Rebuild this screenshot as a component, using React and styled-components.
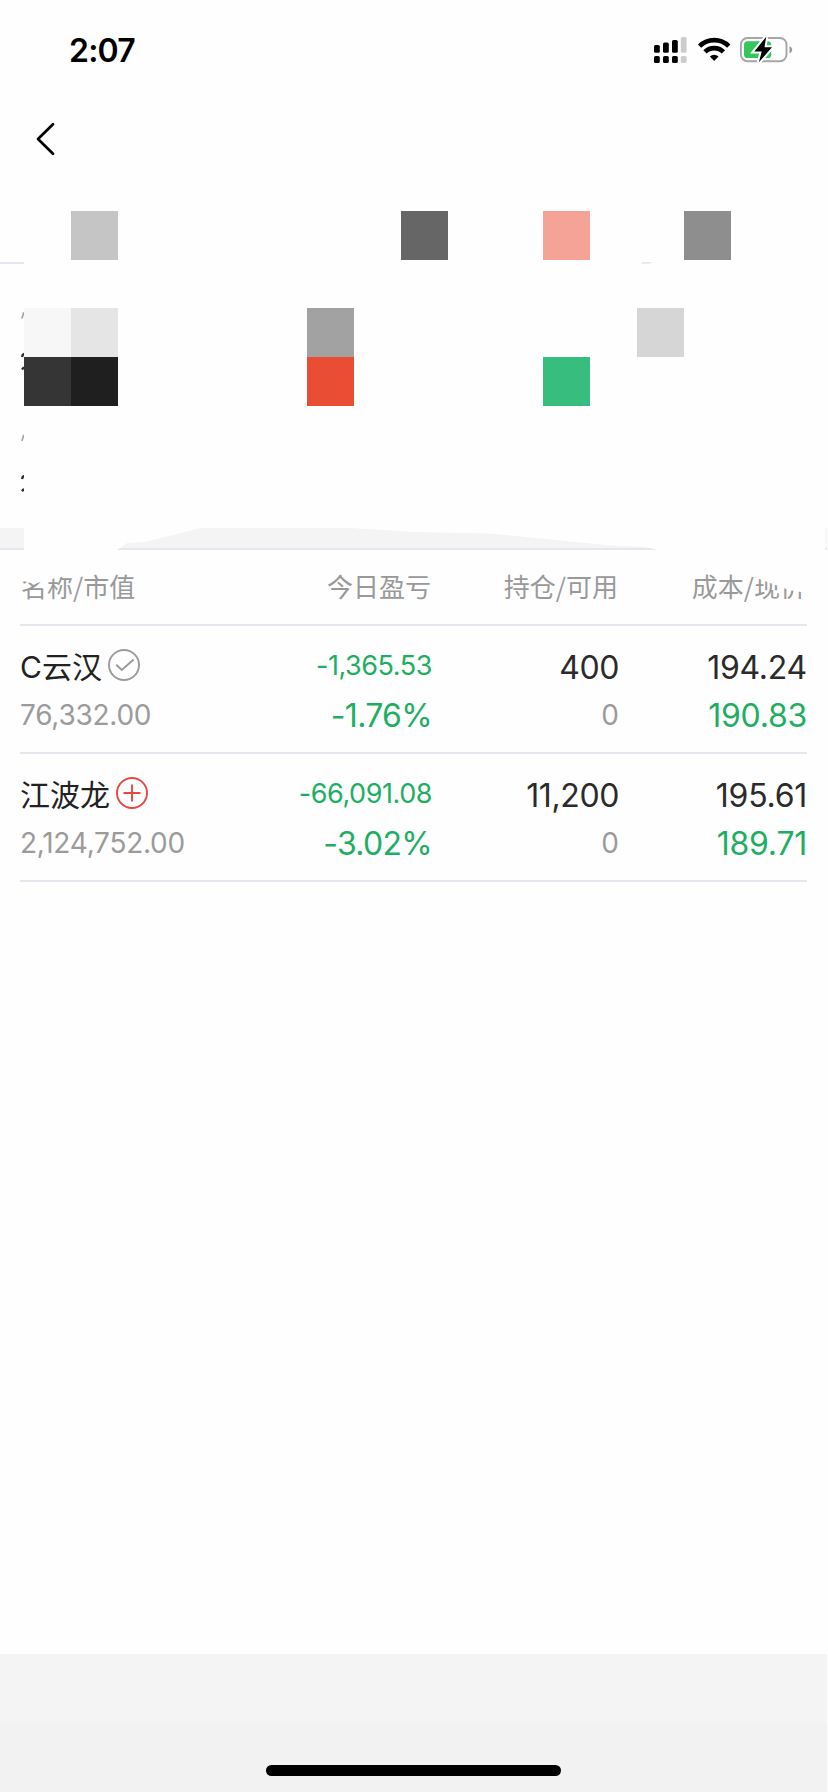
import React from 'react'

import styled, { createGlobalStyle } from 'styled-components'

const GlobalStyle = createGlobalStyle`
  * {
    box-sizing: border-box;
  }
  body {
    margin: 0;
    background: #fefefe;
    font-family: Inter, 'Noto Sans CJK SC', sans-serif;
  }
`
const Page = styled.div`
  display: flex;
  flex-direction: column;
  width: 828px;
  height: 1792px;
  overflow: hidden;
  background: #fefefe;
`
const StatusBar = styled.header`
  display: flex;
  align-items: center;
  justify-content: space-between;
  height: 100px;
  padding: 0 35px 0 69px;
`
const Time = styled.span`
  padding-top: 1px;
  color: #000;
  font-size: 32px;
  font-weight: 600;
  line-height: 40px;
  letter-spacing: -0.8px;
`
const StatusIcons = styled.svg`
  display: block;
  width: 140px;
  height: 28px;
`
const NavBar = styled.nav`
  display: flex;
  align-items: center;
  height: 78px;
  padding-left: 35px;
`
const BackButton = styled.button`
  display: flex;
  padding: 0;
  border: 0;
  background: none;
`
const Summary = styled.section`
  display: flex;
  height: 317px;
  margin-top: 33px;
`
const Edge = styled.svg`
  flex: none;
  width: 24px;
  height: 317px;
`
const Mosaic = styled.div`
  display: grid;
  grid-template-columns: repeat(17, 47.15px);
  grid-template-rows: repeat(6, 48.67px);
  width: 804px;
  overflow: hidden;
`
const Tile = styled.div`
  grid-column: ${(p) => p.$col};
  grid-row: ${(p) => p.$row};
  background: ${(p) => p.$color};
`
const LinePiece = styled.div`
  grid-column: 14;
  grid-row: 2;
  width: 12px;
  height: 2px;
  margin: 2px 0 0 4px;
  background: #e6e6ee;
  clip-path: polygon(2px 0, 100% 0, 9px 100%, 0 100%);
`
const Band = styled.div`
  flex: none;
  width: 827px;
  height: 22px;
  background: #f4f4f4;
  border-bottom: 2px solid #e6e6ee;
  clip-path: polygon(
    0 0, 24px 0, 24px 22px, 117px 22px, 127px 15px, 145px 14px, 201px 0,
    352px 0, 414px 4px, 490px 5.5px, 606px 17px, 645px 19px, 657px 22px,
    825.5px 22px, 825.5px 0, 827px 0, 827px 22px, 0 22px
  );
`
const Table = styled.main`
  flex: 1;
  padding: 0 21px 0 20px;
`
const Row = styled.div`
  display: grid;
  grid-template-columns: 180px 232px 187px 188px;
  height: ${(p) => (p.$head ? 76 : 128)}px;
  padding-top: ${(p) => (p.$head ? 0 : 20)}px;
  border-bottom: 2px solid #e6e6ee;
`
const HeadCell = styled.div`
  position: relative;
  padding: 0 1px;
  color: #999;
  font-family: 'Noto Sans CJK SC', sans-serif;
  font-size: 26px;
  line-height: 71px;
  white-space: nowrap;
  text-align: ${(p) => (p.$left ? 'left' : 'right')};

  /* smear over the upper part of the label */
  &::after {
    content: '';
    position: absolute;
    inset: 0;
    background: #fefefe;
    clip-path: ${(p) => p.$mask || 'polygon(0 0, 0 0, 0 0)'};
  }
`
const Cell = styled.div`
  display: flex;
  flex-direction: column;
  align-items: ${(p) => (p.$left ? 'flex-start' : 'flex-end')};
  white-space: nowrap;
`
const colors = { down: '#1eae63', dark: '#2b2b2b', muted: '#9b9b9b' }

const Value = styled.span`
  display: flex;
  align-items: center;
  height: ${(p) => (p.$second ? 54 : 42)}px;
  padding-bottom: ${(p) => p.$lift || 0}px;
  color: ${(p) => colors[p.$tone]};
  font-size: ${(p) => p.$size || 32}px;
  letter-spacing: ${(p) => p.$spacing || 0}px;
`
const Name = styled.span`
  display: flex;
  align-items: center;
  height: 42px;
  color: #222;
  font-size: 30px;
  line-height: 42px;

  svg {
    margin: -5px 0 0 6px;
  }
`
const TabBar = styled.footer`
  flex: none;
  display: flex;
  justify-content: center;
  align-items: flex-end;
  width: 827px;
  height: 138px;
  padding-bottom: 16px;
  background: linear-gradient(#f4f4f4 70px, #f2f2f2 70px);
`
const HomeIndicator = styled.div`
  width: 295px;
  height: 11px;
  border-radius: 6px;
  background: #000;
`

const tiles = [
  { col: 2, row: 1, color: '#c5c5c5' },
  { col: 9, row: 1, color: '#666' },
  { col: 12, row: 1, color: '#f5a397' },
  { col: 15, row: 1, color: '#8e8e8e' },
  { col: 1, row: 3, color: '#f7f7f7' },
  { col: 2, row: 3, color: '#e5e5e5' },
  { col: 7, row: 3, color: '#a2a2a2' },
  { col: 14, row: 3, color: '#d6d6d6' },
  { col: 1, row: 4, color: '#353535' },
  { col: 2, row: 4, color: '#1f1f1f' },
  { col: 7, row: 4, color: '#e94e34' },
  { col: 12, row: 4, color: '#37be7f' },
]

const holdings = [
  {
    name: 'C云汉',
    icon: 'check',
    value: '76,332.00',
    profit: '-1,365.53',
    rate: '-1.76%',
    amount: '400',
    free: '0',
    cost: '194.24',
    price: '190.83',
  },
  {
    name: '江波龙',
    icon: 'plus',
    value: '2,124,752.00',
    profit: '-66,091.08',
    rate: '-3.02%',
    amount: '11,200',
    free: '0',
    cost: '195.61',
    price: '189.71',
  },
]

const MarkIcon = ({ type }) => (
  <svg width="32" height="32" viewBox="0 0 32 32" fill="none">
    <circle
      cx="16"
      cy="16"
      r="15"
      stroke={type === 'plus' ? '#e8473f' : '#9b9b9b'}
      strokeWidth="1.9"
    />
    {type === 'plus' ? (
      <path d="M16 7.5v17M7.5 16h17" stroke="#e8473f" strokeWidth="1.9" />
    ) : (
      <path d="M8.2 15.7l5.6 5.2L25.6 10.6" stroke="#9b9b9b" strokeWidth="2" />
    )}
  </svg>
)

const Status = () => (
  <StatusIcons viewBox="653 36 140 28">
    <g fill="#000">
      <rect x="654" y="45" width="5.8" height="7.8" rx="1.6" />
      <rect x="663" y="42.6" width="5.8" height="10.2" rx="1.6" />
      <rect x="672" y="40" width="5.8" height="12.8" rx="1.6" />
      <rect x="654" y="56" width="5.8" height="7" rx="1.6" />
      <rect x="663" y="56" width="5.8" height="7" rx="1.6" />
      <rect x="672" y="56" width="5.8" height="7" rx="1.6" />
    </g>
    <g fill="#ccc">
      <rect x="680.8" y="37" width="5.8" height="15.8" rx="1.6" />
      <rect x="680.8" y="56" width="5.8" height="7" rx="1.6" />
    </g>
    <g fill="none" stroke="#000" strokeWidth="4.6">
      <path d="M699.6 46.2a20.6 20.6 0 0 1 29.2 0" />
      <path d="M705 51.9a13 13 0 0 1 18.4 0" />
    </g>
    <path d="M709.9 56.6a6.2 6.2 0 0 1 8.6 0l-4.3 4.5z" fill="#000" />
    <rect
      x="740.9"
      y="38"
      width="45.6"
      height="23.2"
      rx="6.6"
      fill="#fff"
      stroke="#a6a6a6"
      strokeWidth="1.9"
    />
    <path d="M789.5 46.3c3.6 1.1 3.6 6 0 7z" fill="#999" />
    <rect x="744" y="41.3" width="27.2" height="16.7" rx="3.6" fill="#34c759" />
    <path
      d="M766.2 36.8L754.3 51.4h7.4l-2.8 10.9L772 47.3h-7.5z"
      fill="#000"
      stroke="#fff"
      strokeWidth="4"
      paintOrder="stroke"
    />
  </StatusIcons>
)

const App = () => {
  return (
    <>
      <GlobalStyle />
      <Page>
        <StatusBar>
          <Time>2:07</Time>
          <Status />
        </StatusBar>
        <NavBar>
          <BackButton>
            <svg width="22" height="34" viewBox="0 0 22 34" fill="none">
              <path
                d="M18 2.2L3 17l15 14.8"
                stroke="#000"
                strokeWidth="2.7"
                strokeLinecap="round"
                strokeLinejoin="round"
              />
            </svg>
          </BackButton>
        </NavBar>
        <Summary>
          {/* what is left of the labels at the edge of the mosaic */}
          <Edge viewBox="0 0 24 317" fill="none">
            <path d="M0 52h24" stroke="#e6e6ee" strokeWidth="2" />
            <path
              d="M21.8 107.5q1.3-3 1.8-6.2M21.8 230q1.3-3 1.8-6.2"
              stroke="#a2a2a2"
              strokeWidth="1.6"
            />
            <path
              d="M22 146q.4-2.2 2-3.4M22 158.5l2-2.3M22 268q.4-2.2 2-3.4M22 280.2l2-2.3"
              stroke="#2b2b2b"
              strokeWidth="2.4"
            />
          </Edge>
          <Mosaic>
            {tiles.map((t) => (
              <Tile
                key={`${t.col}-${t.row}`}
                $col={t.col}
                $row={t.row}
                $color={t.color}
              />
            ))}
            <LinePiece />
          </Mosaic>
        </Summary>
        <Band />
        <Table>
          <Row $head>
            <HeadCell
              $left
              $mask="polygon(0 0, 60px 0, 52px 26px, 40px 27px, 24px 31px, 14px 34px, 0 30px)"
            >
              名称/市值
            </HeadCell>
            <HeadCell>今日盈亏</HeadCell>
            <HeadCell>持仓/可用</HeadCell>
            <HeadCell $mask="polygon(132px 0, 188px 0, 188px 43px, 170px 40px, 132px 26px)">
              成本/现价
            </HeadCell>
          </Row>
          {holdings.map((h) => (
            <Row key={h.name}>
              <Cell $left>
                <Name>
                  {h.name}
                  <MarkIcon type={h.icon} />
                </Name>
                <Value $tone="muted" $size={28} $second $spacing={-0.25} $lift={1}>
                  {h.value}
                </Value>
              </Cell>
              <Cell>
                <Value $tone="down" $size={27} $spacing={-0.45} $lift={3}>
                  {h.profit}
                </Value>
                <Value $tone="down" $spacing={-0.7} $second>
                  {h.rate}
                </Value>
              </Cell>
              <Cell>
                <Value $tone="dark" $spacing={-0.4}>
                  {h.amount}
                </Value>
                <Value $tone="muted" $size={28} $second $lift={1}>
                  {h.free}
                </Value>
              </Cell>
              <Cell>
                <Value $tone="dark" $spacing={-0.25}>
                  {h.cost}
                </Value>
                <Value $tone="down" $spacing={-0.25} $second>
                  {h.price}
                </Value>
              </Cell>
            </Row>
          ))}
        </Table>
        <TabBar>
          <HomeIndicator />
        </TabBar>
      </Page>
    </>
  )
}

export default App
